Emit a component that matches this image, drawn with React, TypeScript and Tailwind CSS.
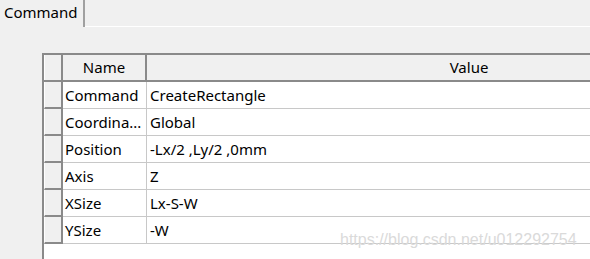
import React from 'react'

// Property grid from a CAD command panel — one tab, row headers, Name/Value columns.
const rows: [string, string][] = [
  ['Command', 'CreateRectangle'],
  ['Coordina...', 'Global'],
  ['Position', '-Lx/2 ,Ly/2 ,0mm'],
  ['Axis', 'Z'],
  ['XSize', 'Lx-S-W'],
  ['YSize', '-W'],
]

export default function App() {
  return (
    <div
      className="relative h-[259px] w-[590px] overflow-hidden bg-[#f0f0f0] text-[15px] text-black"
      style={{ fontFamily: '"Noto Sans", "Open Sans", sans-serif' }}
    >
      {/* tab strip */}
      <div className="flex h-[27px]">
        <div className="flex w-[85px] items-center border-r-2 border-r-[#a0a0a0] pl-[4px] pb-[3px]">Command</div>
        <div className="flex-1 border-b border-b-white" />
      </div>

      {/* grid */}
      <div className="pl-[42px] pt-[26px]">
        <div className="w-[800px] border-l-2 border-t-2 border-[#8a8a8a] bg-white">
          <div className="flex h-[27px] border-b-2 border-b-[#8a8a8a] bg-[#f0f0f0]">
            <div className="w-[19px] border-r-2 border-r-[#8a8a8a] border-l border-l-white" />
            <div className="flex w-[84px] items-center justify-center border-r-2 border-r-[#8a8a8a]">Name</div>
            <div className="flex w-[646px] items-center justify-center border-r-2 border-r-[#8a8a8a]">Value</div>
          </div>
          {rows.map(([name, value]) => (
            <div key={name} className="flex h-[27px]">
              <div className="w-[19px] border-b-2 border-r-2 border-[#8a8a8a] border-l border-l-white bg-[#f0f0f0]" />
              <div className="flex w-[84px] items-center border-b border-r border-[#c8c8c8] pl-[2px] whitespace-nowrap">
                {name}
              </div>
              <div className="flex flex-1 items-center border-b border-[#c8c8c8] pl-[3px]">{value}</div>
            </div>
          ))}
          <div className="h-[40px]" />
        </div>
      </div>

      {/* watermark */}
      <div
        className="absolute left-[340px] top-[228px] text-[16px] text-[#dadada]"
        style={{ fontFamily: '"Liberation Sans", sans-serif' }}
      >
        https://blog.csdn.net/u012292754
      </div>
    </div>
  )
}
